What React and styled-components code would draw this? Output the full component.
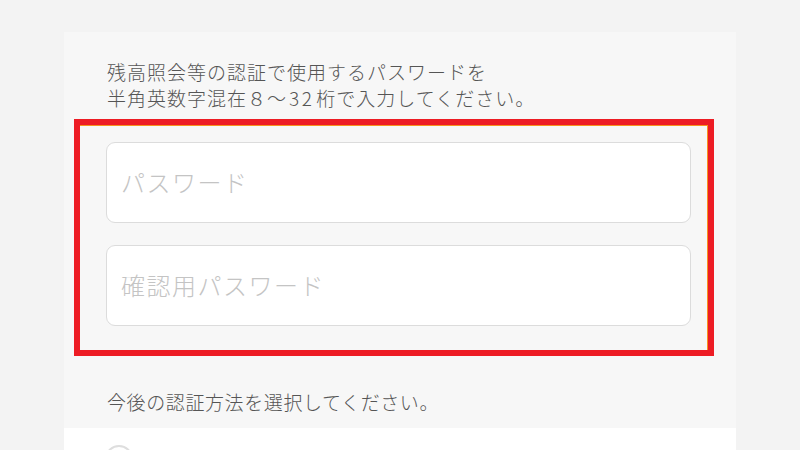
import styled, { createGlobalStyle } from 'styled-components';

const GlobalStyle = createGlobalStyle`
  html, body {
    margin: 0;
    padding: 0;
    background: #f3f3f3;
    font-family: "Noto Sans CJK JP", "Noto Sans", sans-serif;
  }
`;

const StyledPanel = styled.div`
  margin: 32px 64px 0;
  height: 418px;
  overflow: hidden;
  background: #f7f7f7;
  padding-top: 27px;
  box-sizing: border-box;
`;

const StyledNote = styled.p`
  margin: 0;
  padding-left: 43px;
  font-size: 19px;
  font-weight: 300;
  line-height: 26px;
  letter-spacing: 1px;
  color: #555;
`;

const StyledDigits = styled.span`
  letter-spacing: 2.5px;
  margin: 0 2px;
`;

const StyledHighlight = styled.div`
  margin: 8px 22px 0 10px;
  border: 6px solid #ed1c24;
`;

const StyledFields = styled.div`
  display: flex;
  flex-direction: column;
  gap: 22px;
  padding: 16px 16px 24px 26px;
  border-top: 1px solid #f7931e;
  border-right: 1px solid #f7931e;
`;

const StyledInput = styled.input`
  box-sizing: border-box;
  width: 100%;
  height: 81px;
  padding: 0 14px 3px;
  border: 1px solid #dcdcdc;
  border-radius: 9px;
  background: #fff;
  font-family: inherit;
  font-size: 24px;
  font-weight: 300;
  letter-spacing: 1.5px;
  color: #333;
  outline: none;

  &::placeholder {
    color: #c4c4c4;
  }
`;

const StyledQuestion = styled(StyledNote)`
  margin-top: 33px;
  letter-spacing: 0.6px;
`;

const StyledOptions = styled.div`
  margin-top: 13px;
  height: 60px;
  background: #fff;
  padding: 16px 0 0 41px;
  box-sizing: border-box;
  border-top: 1px solid #fff;
`;

const StyledRadio = styled.span`
  display: block;
  width: 28px;
  height: 28px;
  border-radius: 50%;
  border: 2px solid #dedede;
  box-sizing: border-box;
`;

const App = () => {
  return (
    <>
      <GlobalStyle />
      <StyledPanel>
        <StyledNote>
          残高照会等の認証で使用するパスワードを
          <br />
          半角英数字混在８～<StyledDigits>32</StyledDigits>桁で入力してください。
        </StyledNote>
        <StyledHighlight>
          <StyledFields>
            <StyledInput type="password" placeholder="パスワード" />
            <StyledInput type="password" placeholder="確認用パスワード" />
          </StyledFields>
        </StyledHighlight>
        <StyledQuestion>今後の認証方法を選択してください。</StyledQuestion>
        <StyledOptions>
          <StyledRadio />
        </StyledOptions>
      </StyledPanel>
    </>
  );
};

export default App;
